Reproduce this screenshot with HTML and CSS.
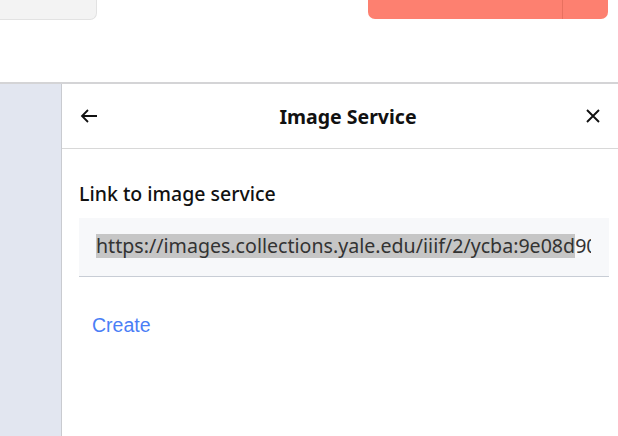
FILE: index.html
```html
<!DOCTYPE html>
<html>
<head>
<meta charset="utf-8">
<link rel="stylesheet" href="styles.css">
</head>
<body>
<div class="topbar">
  <div class="tab-box"></div>
  <div class="spacer"></div>
  <div class="split-btn"><div class="split-main"></div><div class="split-caret"></div></div>
</div>
<div class="main">
  <div class="sidebar"></div>
  <div class="panel">
    <div class="panel-head">
      <button class="icon-btn" aria-label="Back">
        <svg width="18" height="16" viewBox="0 0 18 16"><path d="M17 8H2M8 2L2 8l6 6" fill="none" stroke="#111" stroke-width="1.8"/></svg>
      </button>
      <div class="panel-title">Image Service</div>
      <button class="icon-btn" aria-label="Close">
        <svg width="16" height="16" viewBox="0 0 16 16"><path d="M2 2l12 12M14 2L2 14" fill="none" stroke="#111" stroke-width="1.9"/></svg>
      </button>
    </div>
    <div class="panel-body">
      <div class="field-label">Link to image service</div>
      <div class="input"><div class="input-text"><span class="sel">https://images.collections.yale.edu/iiif/2/ycba:9e08d</span>90</div></div>
      <button class="link-btn">Create</button>
    </div>
  </div>
</div>
</body>
</html>
```
FILE: styles.css
```css
html, body { margin: 0; padding: 0; background: #fff; }
body { width: 618px; height: 436px; overflow: hidden; font-family: "Noto Sans", "Open Sans", sans-serif; color: #111; }
.topbar { height: 82px; display: flex; align-items: flex-start; border-bottom: 2px solid #d4d4d6; box-sizing: content-box; }
.tab-box { width: 96px; height: 19px; background: #f3f3f3; border: 1px solid #e2e2e2; border-top: none; border-left: none; border-bottom-right-radius: 7px; }
.spacer { flex: 1; }
.split-btn { width: 240px; height: 19px; margin-right: 10px; display: flex; background: #fd8070; border-bottom-left-radius: 7px; border-bottom-right-radius: 7px; }
.split-main { width: 194px; border-right: 1px solid #e8705f; }
.split-caret { flex: 1; }
.main { display: flex; height: 352px; }
.sidebar { width: 61px; flex-shrink: 0; background: #e2e6f0; border-right: 1px solid #c9cbd0; }
.panel { flex: 1; min-width: 0; display: flex; flex-direction: column; }
.panel-head { height: 64px; display: flex; align-items: center; justify-content: space-between; padding: 0 16px 0 18px; border-bottom: 1px solid #d8d8d8; }
.icon-btn { border: none; background: none; padding: 0; width: 18px; height: 18px; display: flex; align-items: center; justify-content: center; }
.panel-title { font-weight: 700; font-size: 19.5px; margin-left: 14px; }
.panel-body { padding: 32px 9px 0 17px; min-width: 0; }
.field-label { font-size: 19.5px; font-weight: 500; line-height: 26px; }
.input { margin-top: 11px; height: 59px; box-sizing: border-box; background: #f7f8fa; border-bottom: 1px solid #c8cdd5; padding: 0 18px 3px 17px; display: flex; align-items: center; font-size: 19.6px; color: #333; min-width: 0; }
.input-text { white-space: nowrap; overflow: hidden; flex: 1; min-width: 0; line-height: 24px; }
.sel { background: #c6c6c6; }
.link-btn { margin-top: 37px; border: none; background: none; padding: 0 0 0 13px; font-family: "Liberation Sans", Arial, sans-serif; font-size: 19.5px; color: #4a7ef6; }
```
